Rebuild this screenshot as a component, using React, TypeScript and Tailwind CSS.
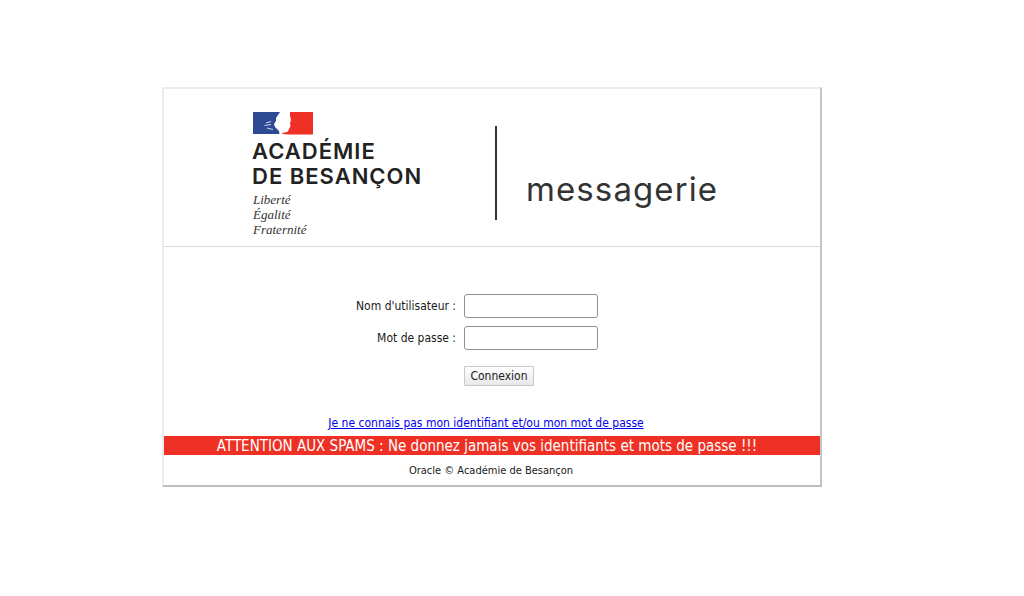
import React from 'react';

function Flag() {
    return (
        <svg width="61" height="23" viewBox="0 0 61 23" className="block">
            <path fill="#2f4a94" d="M1 0H28L26 3 24 6 24 9 22 12 23 15 25 17 27 19 27.500 22H1Z" />
            <path fill="#ee3124" d="M38 0H61V22.500H36L31 22 29.500 21 33 20.500 36 19.500 37 17 38.500 14 38 11 39 8 38 4Z" />
            <path fill="none" stroke="#c8d0e4" strokeWidth="1.2" d="M14 11 19 9.500M12.500 13.500 19 12.500M15 16 21 17.500" />
        </svg>
    );
}

export default function App() {
    return (
        <div className="min-h-[596px] bg-white pt-[87px] pl-[162px] font-['DejaVu_Sans',sans-serif] [font-stretch:condensed] text-[#1a1a1a]">
            <div className="w-[660px] h-[400px] flex flex-col border-t-2 border-l-2 border-t-[#ececec] border-l-[#ececec] border-r-2 border-b-2 border-r-[#c4c4c4] border-b-[#bdbdbd]">
                {/* Header */}
                <div className="h-[158px] shrink-0 flex border-b border-[#d8d8d8]">
                    <div className="w-[331px] shrink-0 pl-[88px] pt-[23px]">
                        <Flag />
                        <div className="mt-[4px] font-['Inter',sans-serif] font-semibold text-[22px] leading-[25px] tracking-[1px] text-[#222] whitespace-nowrap">
                            <div>ACADÉMIE</div>
                            <div>DE BESANÇON</div>
                        </div>
                        <div className="mt-[3px] pl-[1px] font-['Liberation_Serif',serif] italic text-[13px] leading-[15px] text-[#333]">
                            <div>Liberté</div>
                            <div>Égalité</div>
                            <div>Fraternité</div>
                        </div>
                    </div>
                    <div className="w-[2px] h-[94px] mt-[37px] bg-[#333] shrink-0" />
                    <div className="ml-[29px] pt-[76px] font-['Inter',sans-serif] text-[33px] leading-[48px] tracking-[1.1px] text-[#333]">
                        messagerie
                    </div>
                </div>

                {/* Form */}
                <div className="grid grid-cols-[293px_134px] gap-x-[7px] gap-y-[8px] items-center pt-[47px] text-[12px]">
                    <label className="text-right pr-[1px]">Nom d'utilisateur :</label>
                    <input type="text" className="h-[24px] border border-[#8f8f8f] rounded-[3px] bg-white" />
                    <label className="text-right pr-[1px]">Mot de passe :</label>
                    <input type="text" className="h-[24px] border border-[#8f8f8f] rounded-[3px] bg-white" />
                    <div className="col-start-2 pt-[8px]">
                        <button className="h-[20px] w-[70px] border border-[#c8c8c8] rounded-[1px] bg-gradient-to-b from-white to-[#e8e8e8] text-[12px] leading-none">
                            Connexion
                        </button>
                    </div>
                </div>

                <div className="mt-[28px] pr-[12px] text-center text-[12px] leading-[18px]">
                    <a href="#" className="text-[#0000ee] underline">Je ne connais pas mon identifiant et/ou mon mot de passe</a>
                </div>

                <div className="mt-[4px] h-[19px] pr-[10px] bg-[#ee3124] text-center text-white text-[15px] leading-[20px]">
                    ATTENTION AUX SPAMS : Ne donnez jamais vos identifiants et mots de passe !!!
                </div>

                <div className="mt-[7px] pr-[2px] text-center text-[11px] leading-[18px]">
                    Oracle © Académie de Besançon
                </div>
            </div>
        </div>
    );
}
